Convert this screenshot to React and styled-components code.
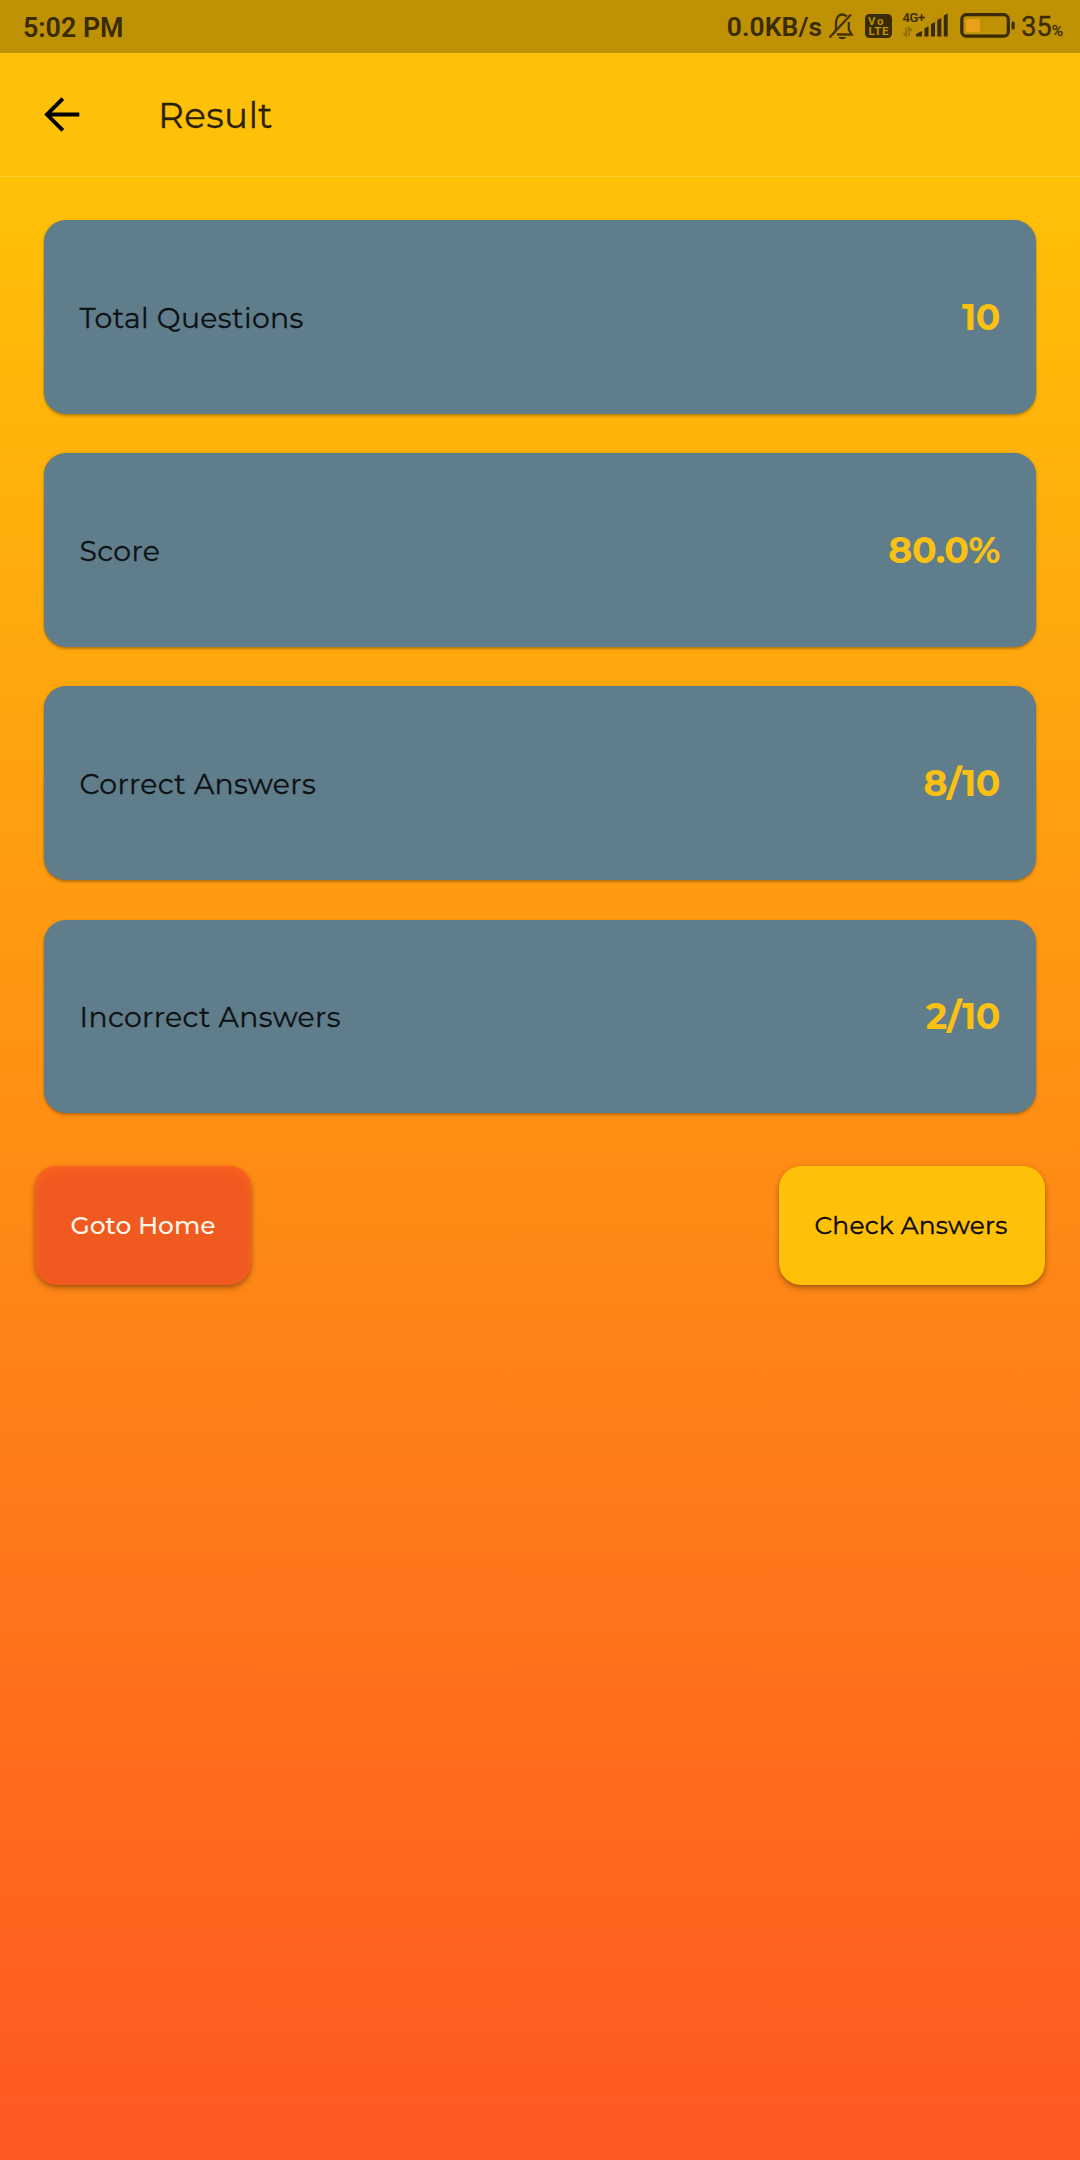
import React from "react";
import styled, { createGlobalStyle } from "styled-components";

const GlobalStyle = createGlobalStyle`
  * { box-sizing: border-box; }
  html, body { margin: 0; padding: 0; }
  body { font-family: Montserrat, Inter, "Open Sans", sans-serif; }
`;

const Screen = styled.div`
  display: flex;
  flex-direction: column;
  width: 1080px;
  height: 2160px;
  overflow: hidden;
  background: linear-gradient(180deg, #ffc107 0, #ffc107 176px, #ff5722 100%);
`;

const StatusBar = styled.header`
  display: flex;
  justify-content: space-between;
  flex: none;
  height: 53px;
  padding: 0 17px 0 23px;
  background: #bf9105;
  color: #392b02;
  font-family: Roboto, sans-serif;
  line-height: 54px;
`;

const Clock = styled.span`
  font-size: 26.8px;
  font-weight: 600;
  line-height: 56px;
`;

const Speed = styled.span`
  font-size: 26.4px;
  font-weight: 600;
  letter-spacing: 0.1px;
`;

const StatusGroup = styled.div`
  display: flex;
  align-items: flex-start;
`;

const StatusIcons = styled.svg`
  display: block;
  flex: none;
  margin: 0 3px 0 6px;
`;

const Battery = styled.span`
  display: flex;
  align-items: baseline;
  font-size: 27px;
  -webkit-text-stroke: 0.3px currentColor;
`;

const Percent = styled.small`
  font-size: 15.5px;
`;

const AppBar = styled.nav`
  display: flex;
  align-items: center;
  flex: none;
  height: 124px;
  padding: 0 44px;
  gap: 78px;
  border-bottom: 1px solid #ffcb2c;
`;

const BackButton = styled.button`
  display: flex;
  padding: 0;
  border: 0;
  background: none;
`;

const Title = styled.h1`
  margin: 0;
  padding-top: 1px;
  color: #2a2003;
  font-size: 35.8px;
  font-weight: 400;
  line-height: 44px;
  letter-spacing: 0.35px;
  -webkit-text-stroke: 0.3px currentColor;
`;

const Content = styled.main`
  display: flex;
  flex-direction: column;
  padding: 43px 35px 0;
`;

const Cards = styled.section`
  display: flex;
  flex-direction: column;
  gap: 39.7px;
  padding: 0 9px;
`;

const Card = styled.article`
  display: flex;
  align-items: center;
  justify-content: space-between;
  height: 193.5px;
  padding: 0 36px 0 35.5px;
  border-radius: 22px;
  background: #607d8b;
  box-shadow: 0 2px 3px rgba(0, 0, 0, 0.26), 0 0 2px rgba(0, 0, 0, 0.16);
`;

const Label = styled.span`
  padding-top: 2px;
  color: #0d1113;
  font-size: 28.3px;
  line-height: 36px;
  letter-spacing: 0.38px;
  -webkit-text-stroke: 0.3px currentColor;
`;

const Value = styled.strong`
  color: #fbc112;
  font-size: 36.3px;
  font-weight: 700;
  line-height: 44px;
  letter-spacing: -0.4px;
`;

const Actions = styled.footer`
  display: flex;
  justify-content: space-between;
  margin-top: 53px;
`;

const Action = styled.button`
  width: ${(p) => p.$width}px;
  height: 119px;
  padding: ${(p) => (p.$primary ? "0 0 2px" : "0 2px 2px 0")};
  border: 0;
  border-radius: 22px;
  background: ${(p) => (p.$primary ? "#f05a20" : "#ffc107")};
  color: ${(p) => (p.$primary ? "#fff5e8" : "#0a0800")};
  font-family: inherit;
  font-size: 24.9px;
  font-weight: ${(p) => (p.$primary ? 500 : 400)};
  letter-spacing: ${(p) => (p.$primary ? 0 : 0.25)}px;
  -webkit-text-stroke: ${(p) => (p.$primary ? 0 : 0.4)}px currentColor;
  box-shadow: 0 3px 6px rgba(0, 0, 0, 0.3), 0 1px 3px rgba(0, 0, 0, 0.14)
    ${(p) => p.$primary && ", inset 0 4px 8px #ff6220"};
`;

const results = [
  { label: "Total Questions", value: "10" },
  { label: "Score", value: "80.0%" },
  { label: "Correct Answers", value: "8/10" },
  { label: "Incorrect Answers", value: "2/10" },
];

function Indicators() {
  return (
    <StatusIcons width="190" height="53" viewBox="828 0 190 53" fill="#392b02" fontFamily="Roboto, sans-serif">
      <g fill="none" stroke="#443302" strokeWidth="2.3">
        <path d="M833.5 34L836 29.5V24C836 18 838.5 14.5 842.3 14.5C844 14.5 845.6 15.2 846.8 16.6M848.8 22V29.5L851.6 34.5H837" />
        <path d="M829.5 37.5L851 14.5" />
      </g>
      <path d="M838 37H846.5Q842.2 41.5 838 37Z" />
      <rect x="865" y="14" width="27" height="24" rx="4.5" />
      <text x="868" y="24.5" fill="#bf9105" fontSize="11.5" fontWeight="700" textLength="15.5">Vo</text>
      <text x="868.5" y="35.3" fill="#bf9105" fontSize="11.5" fontWeight="700" textLength="20">LTE</text>
      <text x="902.5" y="22" fontSize="12.8" fontWeight="600" textLength="22.5">4G+</text>
      <path d="M903.5 33L906.3 36V27.5M909 36V27.8L912 30.8" fill="none" stroke="#8a6904" strokeWidth="1.5" />
      <path d="M916 36.5V34L922 31V36.5ZM924.5 36.5V28.3L928.5 26.3V36.5ZM931 36.5V24L935 22V36.5ZM937.3 36.5V20L941.3 18V36.5ZM943.8 36.5V15.5L947.7 13.5V36.5Z" />
      <rect x="961.8" y="14.7" width="46.5" height="21.5" rx="4.5" fill="none" stroke="#392b02" strokeWidth="3.2" />
      <rect x="966" y="19" width="14" height="13" rx="1.5" fill="#eba01c" />
      <rect x="1011.5" y="21.5" width="3.2" height="8" rx="1.5" />
    </StatusIcons>
  );
}

function BackArrow() {
  return (
    <svg width="36" height="36" viewBox="0 0 36 36" fill="none" stroke="#000" strokeWidth="3.9">
      <path d="M35.3 17.5H4M18.8 1.6L3 17.5L18.8 33.4" />
    </svg>
  );
}

export default function App() {
  return (
    <>
      <GlobalStyle />
      <Screen>
        <StatusBar>
          <Clock>5:02 PM</Clock>
          <StatusGroup>
            <Speed>0.0KB/s</Speed>
            <Indicators />
            <Battery>35<Percent>%</Percent></Battery>
          </StatusGroup>
        </StatusBar>
        <AppBar>
          <BackButton aria-label="Back"><BackArrow /></BackButton>
          <Title>Result</Title>
        </AppBar>
        <Content>
          <Cards>
            {results.map((r) => (
              <Card key={r.label}>
                <Label>{r.label}</Label>
                <Value>{r.value}</Value>
              </Card>
            ))}
          </Cards>
          <Actions>
            <Action $primary $width={216}>Goto Home</Action>
            <Action $width={266}>Check Answers</Action>
          </Actions>
        </Content>
      </Screen>
    </>
  );
}
